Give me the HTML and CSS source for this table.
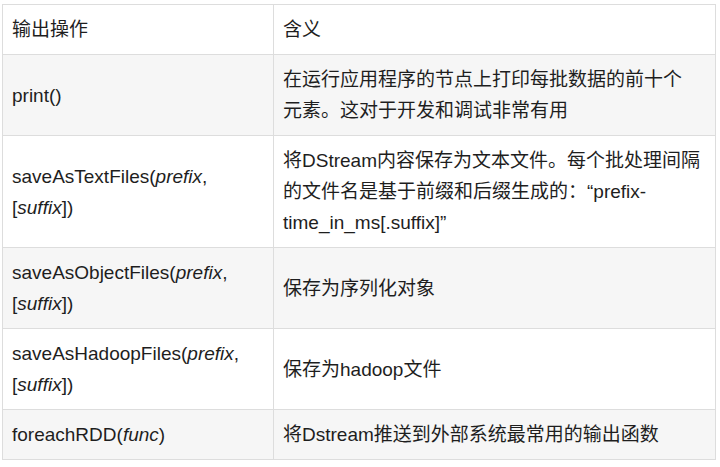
FILE: index.html
```html
<!DOCTYPE html>
<html lang="zh-CN">
<head>
<meta charset="utf-8">
<link rel="stylesheet" href="styles.css">
</head>
<body>
<table class="ops">
  <colgroup>
    <col class="c1">
    <col class="c2">
  </colgroup>
  <thead>
    <tr><th>输出操作</th><th>含义</th></tr>
  </thead>
  <tbody>
    <tr><td>print()</td><td>在运行应用程序的节点上打印每批数据的前十个<br>元素。这对于开发和调试非常有用</td></tr>
    <tr><td>saveAsTextFiles(<em>prefix</em>, [<em>suffix</em>])</td><td>将DStream内容保存为文本文件。每个批处理间隔的文件名是基于前缀和后缀生成的：“prefix-time_in_ms[.suffix]”</td></tr>
    <tr><td>saveAsObjectFiles(<em>prefix</em>, [<em>suffix</em>])</td><td>保存为序列化对象</td></tr>
    <tr><td>saveAsHadoopFiles(<em>prefix</em>, [<em>suffix</em>])</td><td>保存为hadoop文件</td></tr>
    <tr><td>foreachRDD(<em>func</em>)</td><td>将Dstream推送到外部系统最常用的输出函数</td></tr>
  </tbody>
</table>
</body>
</html>
```
FILE: styles.css
```css
html, body {
  background: #fff;
}
body {
  margin: 0;
  padding: 4px 0 0 2px;
  font-family: "Liberation Sans", Arial, "Noto Sans CJK SC", sans-serif;
  font-size: 19px;
  color: #1e1e1e;
}
.ops {
  border-collapse: collapse;
  width: 714px;
  table-layout: fixed;
}
.ops .c1 { width: 271px; }
.ops th,
.ops td {
  border: 1px solid #dddddd;
  padding: 9px 10px 9px 9px;
  line-height: 31px;
  text-align: left;
  vertical-align: middle;
  font-weight: normal;
}
.ops tbody tr:nth-child(odd) {
  background: #f6f6f6;
}
.ops em {
  font-style: italic;
}
```
